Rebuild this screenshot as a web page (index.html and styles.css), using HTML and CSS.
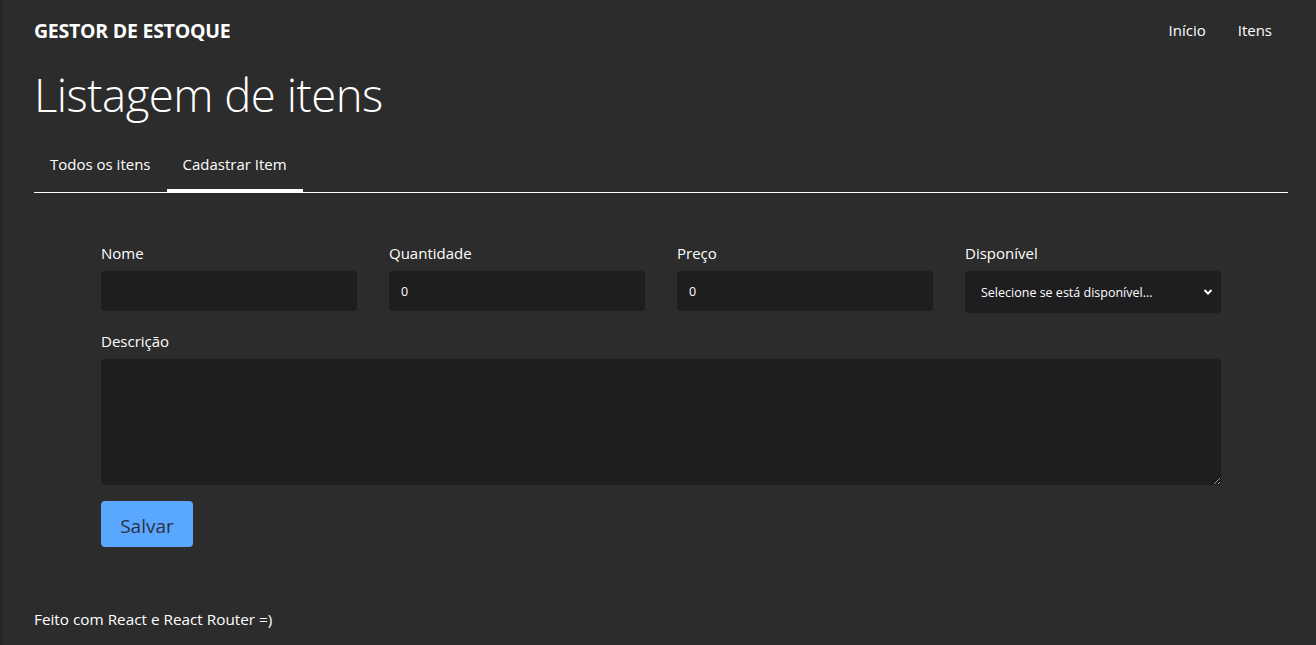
FILE: index.html
```html
<!DOCTYPE html>
<html lang="pt-BR">
<head>
<meta charset="utf-8">
<title>Gestor de Estoque</title>
<link rel="stylesheet" href="styles.css">
</head>
<body>
<div class="app">
  <header class="topbar">
    <span class="brand">GESTOR DE ESTOQUE</span>
    <nav class="topnav">
      <a href="#">Início</a>
      <a href="#">Itens</a>
    </nav>
  </header>
  <main class="main">
    <h1 class="title">Listagem de itens</h1>
    <div class="tabs">
      <a class="tab" href="#">Todos os itens</a>
      <a class="tab active" href="#">Cadastrar Item</a>
    </div>
    <form class="form">
      <div class="grid">
        <label class="field">
          <span class="label">Nome</span>
          <input class="input" type="text">
        </label>
        <label class="field">
          <span class="label">Quantidade</span>
          <input class="input" type="number" value="0">
        </label>
        <label class="field">
          <span class="label">Preço</span>
          <input class="input" type="number" value="0">
        </label>
        <label class="field">
          <span class="label">Disponível</span>
          <span class="select">
            <span>Selecione se está disponível...</span>
            <svg class="chev" width="10" height="8" viewBox="0 0 10 8"><path d="M1.5 2 L5 5.5 L8.5 2" fill="none" stroke="#fff" stroke-width="2"/></svg>
          </span>
        </label>
      </div>
      <label class="field wide">
        <span class="label">Descrição</span>
        <textarea class="textarea"></textarea>
      </label>
      <button class="btn" type="button">Salvar</button>
    </form>
  </main>
  <footer class="footer">Feito com React e React Router =)</footer>
</div>
</body>
</html>
```
FILE: styles.css
```css
* { box-sizing: border-box; }
html, body { margin: 0; height: 100%; }
body {
  background: #2c2c2c;
  color: #fff;
  font-family: "Open Sans", "Noto Sans", sans-serif;
  font-size: 15px;
}
.app {
  height: 645px;
  border-left: 2px solid #242424;
  padding: 0 28px 0 32px;
  display: flex;
  flex-direction: column;
}
.topbar {
  display: flex;
  align-items: center;
  justify-content: space-between;
  height: 60px;
}
.brand { font-weight: 700; font-size: 19.5px; letter-spacing: -0.25px; }
.topnav { display: flex; gap: 32px; padding-right: 16px; }
.topnav a { color: #fff; text-decoration: none; font-size: 15px; }
.title {
  margin: 4px 0 0;
  font-weight: 300;
  font-size: 45.5px;
  line-height: 60px;
  letter-spacing: -0.5px;
}
.tabs {
  display: flex;
  border-bottom: 1px solid #fff;
  margin-top: 14px;
  height: 55px;
}
.tab {
  color: #fff;
  text-decoration: none;
  padding: 1px 16px 0;
  display: flex;
  align-items: center;
  height: 100%;
  font-size: 15px;
  border-bottom: 3px solid transparent;
  margin-bottom: -1px;
}
.tab.active { border-bottom-color: #fff; }
.form {
  width: 1120px;
  margin: 48px auto 0;
  display: flex;
  flex-direction: column;
  align-items: flex-start;
}
.grid {
  width: 100%;
  display: grid;
  grid-template-columns: repeat(4, 1fr);
  gap: 32px;
  align-items: start;
}
.field { display: flex; flex-direction: column; }
.field.wide { width: 100%; margin-top: 16px; }
.label { font-size: 15px; line-height: 24px; margin-bottom: 6px; }
.input, .textarea, .select {
  background: #1e1d20;
  border: none;
  border-radius: 4px;
  color: #fff;
  font-family: inherit;
  font-size: 12.5px;
  outline: none;
}
.input { height: 40px; padding: 0 12px; -moz-appearance: textfield; }
.input::-webkit-outer-spin-button, .input::-webkit-inner-spin-button { -webkit-appearance: none; margin: 0; }
.select {
  height: 42px;
  padding: 0 8px 0 16px;
  display: flex;
  align-items: center;
  justify-content: space-between;
}
.textarea { height: 126px; width: 100%; resize: vertical; }
.btn {
  margin-top: 16px;
  width: 92px;
  height: 46px;
  padding: 3px 0 0;
  background: #5aa7ff;
  color: #2c3140;
  border: none;
  border-radius: 4px;
  font-family: inherit;
  font-size: 19px;
}
.footer {
  margin-top: auto;
  padding-bottom: 16px;
  font-size: 15.3px;
}
```
